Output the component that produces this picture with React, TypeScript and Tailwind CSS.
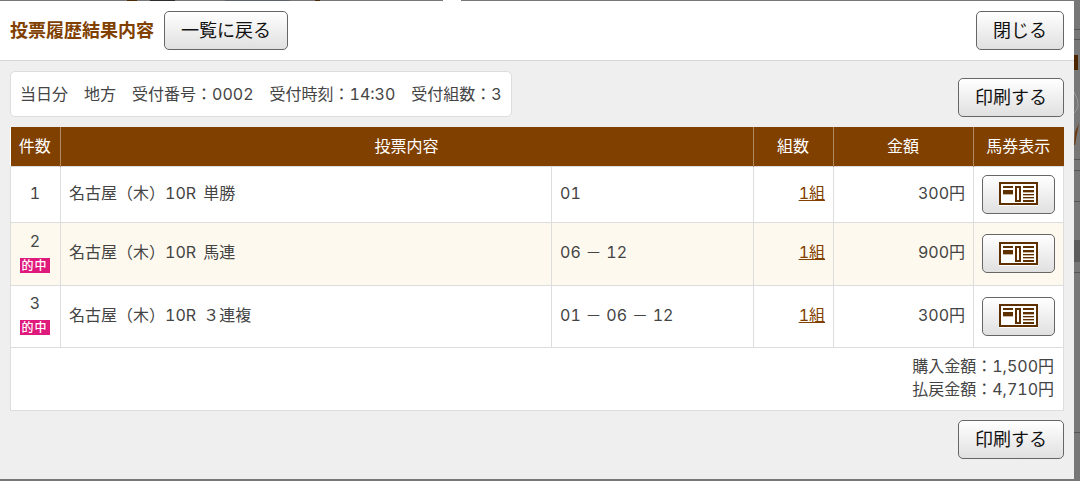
const bets = [
  { no: 1, name: '名古屋（木）10R 単勝', combo: '01', price: '300円', hit: false, rowClass: 'h-[56px] bg-white' },
  { no: 2, name: '名古屋（木）10R 馬連', combo: '06 － 12', price: '900円', hit: true, rowClass: 'h-[63px] bg-[#fdf9ee] [&>td]:pb-[4px]' },
  { no: 3, name: '名古屋（木）10R ３連複', combo: '01 － 06 － 12', price: '300円', hit: true, rowClass: 'h-[62px] bg-white' },
]

function Button({ className, children }: { className: string; children: React.ReactNode }) {
  return (
    <button className={`flex h-[39px] items-center justify-center rounded-[5px] border border-[#666] bg-gradient-to-b from-white to-[#e0e0e0] text-[#111] ${className}`}>
      {children}
    </button>
  )
}

function TicketIcon() {
  return (
    <svg width="39" height="24" viewBox="0 0 39 24" fill="none">
      <rect width="39" height="24" fill="white" />
      <g stroke="#5e3000" strokeWidth="2">
        <rect x="1" y="1" width="37" height="21" />
        <rect x="17" y="5" width="4" height="14" />
      </g>
      <g fill="#5e3000">
        <rect x="4" y="4" width="10" height="2" />
        <rect x="4" y="8" width="10" height="4" />
        <rect x="24" y="4" width="11" height="2" />
        <rect x="24" y="8" width="11" height="2" />
        <rect x="24" y="12" width="11" height="1" />
        <rect x="24" y="15" width="11" height="1" />
        <rect x="24" y="18" width="11" height="2" />
      </g>
      <g fill="#c9b6a0">
        <rect x="4" y="12" width="10" height="1" />
        <rect x="24" y="10" width="11" height="1" />
        <rect x="24" y="13" width="11" height="1" />
        <rect x="24" y="16" width="11" height="1" />
      </g>
    </svg>
  )
}

function BackdropStrip() {
  return (
    <svg className="h-full w-[6px] shrink-0" viewBox="0 0 6 481" preserveAspectRatio="none">
      <rect width="6" height="481" fill="#777" />
      <rect y="240" width="6" height="22" fill="#5c5c5c" />
      <g fill="#555">
        <rect y="29" width="6" height="1" />
        <rect y="39" width="6" height="1" />
        <rect y="159" width="6" height="1" />
        <rect y="170" width="6" height="1" />
        <rect y="201" width="6" height="1" />
        <rect y="272" width="6" height="1" />
        <rect y="432" width="6" height="1" />
      </g>
      <rect x="0" y="55" width="4" height="15" fill="#4a2500" />
      <path d="M0 92 Q5 100 4 106 Q3 111 0 113" stroke="#999" fill="none" />
      <path d="M0 145 L1 132 L5 123 L3 134 L1 145 Z" fill="#6b3a12" />
    </svg>
  )
}

export default function App() {
  return (
    <div className="flex h-[481px] w-[1080px] overflow-hidden bg-[#777] font-['Inter','Noto_Sans_CJK_JP',sans-serif] text-[16px] text-[#444] tabular-nums">
      <div className="flex h-full w-[1074px] shrink-0 flex-col pb-[2px]">
        <div className="flex h-px shrink-0">
          <div className="w-[127px] bg-[#777]" />
          <div className="w-[10px] bg-[#4a2a08]" />
          <div className="w-[13px] bg-[#777]" />
          <div className="w-[25px] bg-[#2c2c2c]" />
          <div className="w-[50px] bg-[#777]" />
          <div className="w-[65px] bg-[#5c6268]" />
          <div className="w-[25px] bg-[#777]" />
          <div className="w-[5px] bg-[#4a2a08]" />
          <div className="w-[123px] bg-[#777]" />
          <div className="w-[18px] bg-white" />
          <div className="flex-1 bg-[#777]" />
        </div>
        <div className="flex h-[60px] shrink-0 items-center border-b border-[#d8d8d8] bg-white px-[10px]">
          <h1 className="text-[18px] font-bold text-[#804000]">投票履歴結果内容</h1>
          <Button className="ml-[10px] w-[124px] text-[18px]">一覧に戻る</Button>
          <Button className="ml-auto w-[88px] text-[18px]">閉じる</Button>
        </div>
        <div className="flex-1 bg-[#efefef] px-[10px] pt-[10px]">
          <div className="flex h-[46px] items-start justify-between">
            <div className="flex h-[46px] w-[502px] items-center gap-[16px] rounded-[5px] border border-[#ddd] bg-white pl-[9px]">
              <span>当日分</span>
              <span>地方</span>
              <span>受付番号：0002</span>
              <span>受付時刻：14:30</span>
              <span>受付組数：3</span>
            </div>
            <Button className="mt-[7px] w-[106px] text-[18px]">印刷する</Button>
          </div>
          <table className="mt-[10px] w-[1053px] table-fixed border-collapse bg-white">
            <colgroup>
              <col className="w-[50px]" />
              <col className="w-[491px]" />
              <col className="w-[202px]" />
              <col className="w-[80px]" />
              <col className="w-[140px]" />
              <col className="w-[90px]" />
            </colgroup>
            <thead>
              <tr className="h-[39px] bg-[#804000] text-white">
                <th className="border-r border-[#b08a60] pr-[1px] font-normal">件数</th>
                <th colSpan={2} className="border-r border-[#b08a60] pr-[1px] font-normal">投票内容</th>
                <th className="border-r border-[#b08a60] pr-[1px] font-normal">組数</th>
                <th className="border-r border-[#b08a60] pr-[1px] font-normal">金額</th>
                <th className="pr-[1px] font-normal">馬券表示</th>
              </tr>
            </thead>
            <tbody>
              {bets.map((bet) => (
                <tr key={bet.no} className={bet.rowClass}>
                  <td className={`border border-[#ddd] pr-[2px] text-center ${bet.hit ? 'pb-[5px]' : 'pb-[2px]'}`}>
                    <div className="pl-[1px] leading-[22px]">{bet.no}</div>
                    {bet.hit && (
                      <div className="mx-auto mt-[6px] flex h-[15px] w-[30px] items-center justify-center bg-[#e01a7c] text-[12px] leading-none font-medium tracking-[1px] text-white">
                        的中
                      </div>
                    )}
                  </td>
                  <td className="border border-[#ddd] pb-[2px] pl-[8px] [word-spacing:3px]">{bet.name}</td>
                  <td className="border border-[#ddd] pb-[2px] pl-[8px] [word-spacing:0.5px]">{bet.combo}</td>
                  <td className="border border-[#ddd] pr-[8px] pb-[2px] text-right text-[#804000] underline">1組</td>
                  <td className="border border-[#ddd] pr-[8px] pb-[2px] text-right">{bet.price}</td>
                  <td className="border border-[#ddd] !pb-0">
                    <Button className="mx-auto w-[73px]">
                      <TicketIcon />
                    </Button>
                  </td>
                </tr>
              ))}
              <tr className="h-[63px]">
                <td colSpan={6} className="border border-[#ddd] pr-[9px] pb-[2px] text-right leading-[23px]">
                  <div>購入金額：1,500円</div>
                  <div>払戻金額：4,710円</div>
                </td>
              </tr>
            </tbody>
          </table>
          <div className="mt-[9px] flex justify-end">
            <Button className="w-[106px] text-[18px]">印刷する</Button>
          </div>
        </div>
      </div>
      <BackdropStrip />
    </div>
  )
}
